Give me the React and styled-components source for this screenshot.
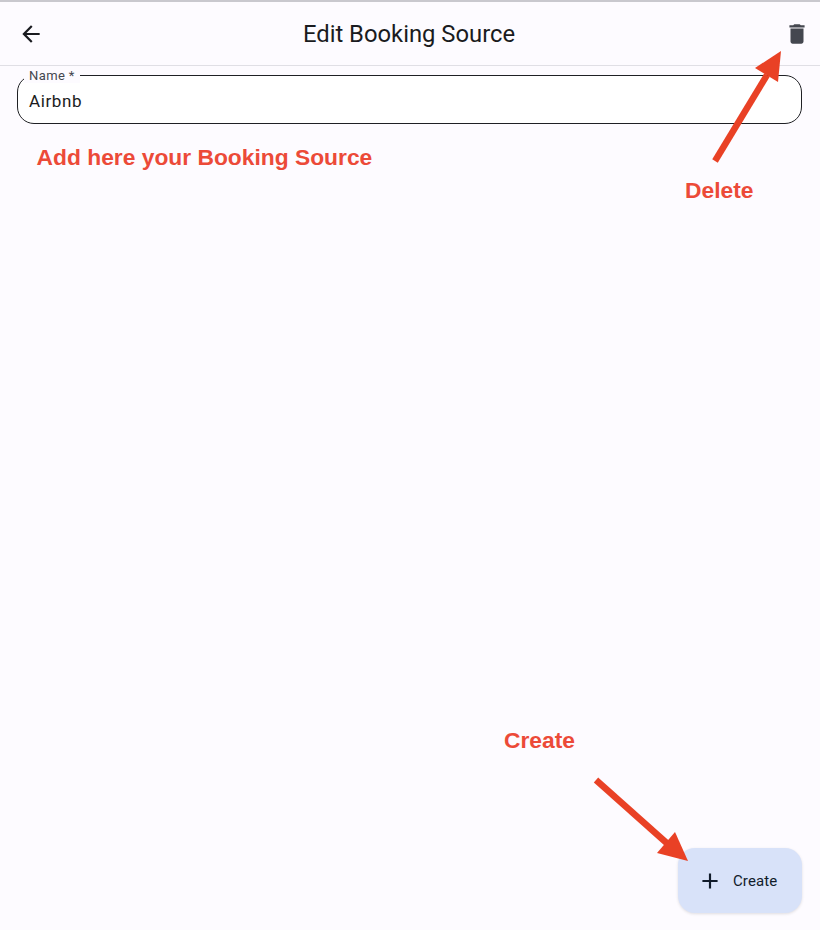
import React from "react";
import styled, { createGlobalStyle } from "styled-components";

const GlobalStyle = createGlobalStyle`
  html, body {
    margin: 0;
    padding: 0;
    background: #ffffff;
  }
`;

export default function App() {
  return (
    <>
      <GlobalStyle />
      <Page>
        <TopBar>
          <BackIcon aria-label="Back">
            <svg width="26" height="26" viewBox="0 0 24 24" fill="#1a1b20">
              <path d="M20 11H7.83l5.59-5.59L12 4l-8 8 8 8 1.41-1.41L7.83 13H20v-2z" />
            </svg>
          </BackIcon>
          <Title>Edit Booking Source</Title>
          <DeleteIcon aria-label="Delete">
            <svg width="26" height="26" viewBox="0 0 24 24" fill="#44474f">
              <path d="M6 19c0 1.1.9 2 2 2h8c1.1 0 2-.9 2-2V7H6v12zM19 4h-3.5l-1-1h-5l-1 1H5v2h14V4z" />
            </svg>
          </DeleteIcon>
        </TopBar>
        <Content>
          <FieldBox>
            <FieldLabel>Name *</FieldLabel>
            <FieldValue>Airbnb</FieldValue>
          </FieldBox>
        </Content>
        <Fab>
          <svg width="26" height="26" viewBox="0 0 24 24" fill="#111c2b">
            <path d="M19 13h-6v6h-2v-6H5v-2h6V5h2v6h6v2z" />
          </svg>
          <FabLabel>Create</FabLabel>
        </Fab>
        <Note $left={36.6} $top={142}>Add here your Booking Source</Note>
        <Note $left={685} $top={175}>Delete</Note>
        <Note $left={504} $top={725}>Create</Note>
        <Arrows width="820" height="930" viewBox="0 0 820 930">
          <line x1="715" y1="161" x2="767" y2="75" stroke="#e94125" strokeWidth="6.5" />
          <polygon points="781,51 755,68 778,82" fill="#e94125" />
          <line x1="596" y1="780" x2="670" y2="846" stroke="#e94125" strokeWidth="6.5" />
          <polygon points="688,861 675,832 657,853" fill="#e94125" />
        </Arrows>
      </Page>
    </>
  );
}

const Page = styled.div`
  position: relative;
  width: 820px;
  height: 930px;
  box-sizing: border-box;
  overflow: hidden;
  display: flex;
  flex-direction: column;
  background: #fdfbff;
  border-top: 2px solid #c9c8ce;
  font-family: Roboto, sans-serif;
`;

const TopBar = styled.header`
  display: grid;
  grid-template-columns: 1fr auto 1fr;
  align-items: center;
  height: 63px;
  padding: 0 10px 0 18px;
  border-bottom: 1px solid #e0dfe5;
`;

const BackIcon = styled.div`
  display: flex;
  justify-content: flex-start;
`;

const DeleteIcon = styled.div`
  display: flex;
  justify-content: flex-end;
`;

const Title = styled.h1`
  margin: 0 0 0 -10px;
  font-size: 23.8px;
  font-weight: 400;
  color: #1a1b20;
`;

const Content = styled.main`
  flex: 1;
  padding: 9px 18px 0 17px;
`;

const FieldBox = styled.div`
  position: relative;
  box-sizing: border-box;
  height: 49px;
  padding: 3px 11px 0;
  display: flex;
  align-items: center;
  background: #ffffff;
  border: 1px solid #1f2024;
  border-radius: 17px;
`;

const FieldLabel = styled.span`
  position: absolute;
  top: -7px;
  left: 6px;
  padding: 0 5px;
  background: #fdfbff;
  font-size: 13px;
  line-height: 14px;
  letter-spacing: 0.4px;
  color: #44474f;
`;

const FieldValue = styled.span`
  font-size: 17px;
  letter-spacing: 0.6px;
  color: #1a1b20;
`;

const Fab = styled.div`
  position: absolute;
  left: 678px;
  top: 846px;
  width: 124px;
  height: 65px;
  box-sizing: border-box;
  padding-left: 19px;
  display: flex;
  align-items: center;
  gap: 10px;
  background: #d8e2f9;
  border-radius: 17px;
  box-shadow: 0 1px 3px rgba(0, 0, 0, 0.12);
`;

const FabLabel = styled.span`
  font-size: 15px;
  letter-spacing: 0.1px;
  color: #111c2b;
`;

const Note = styled.span`
  position: absolute;
  left: ${p => p.$left}px;
  top: ${p => p.$top}px;
  font-family: "Liberation Sans", Arial, sans-serif;
  font-size: 22.8px;
  font-weight: 700;
  line-height: 26px;
  color: #ec4a38;
  white-space: nowrap;
`;

const Arrows = styled.svg`
  position: absolute;
  left: 0;
  top: -2px;
  pointer-events: none;
`;
